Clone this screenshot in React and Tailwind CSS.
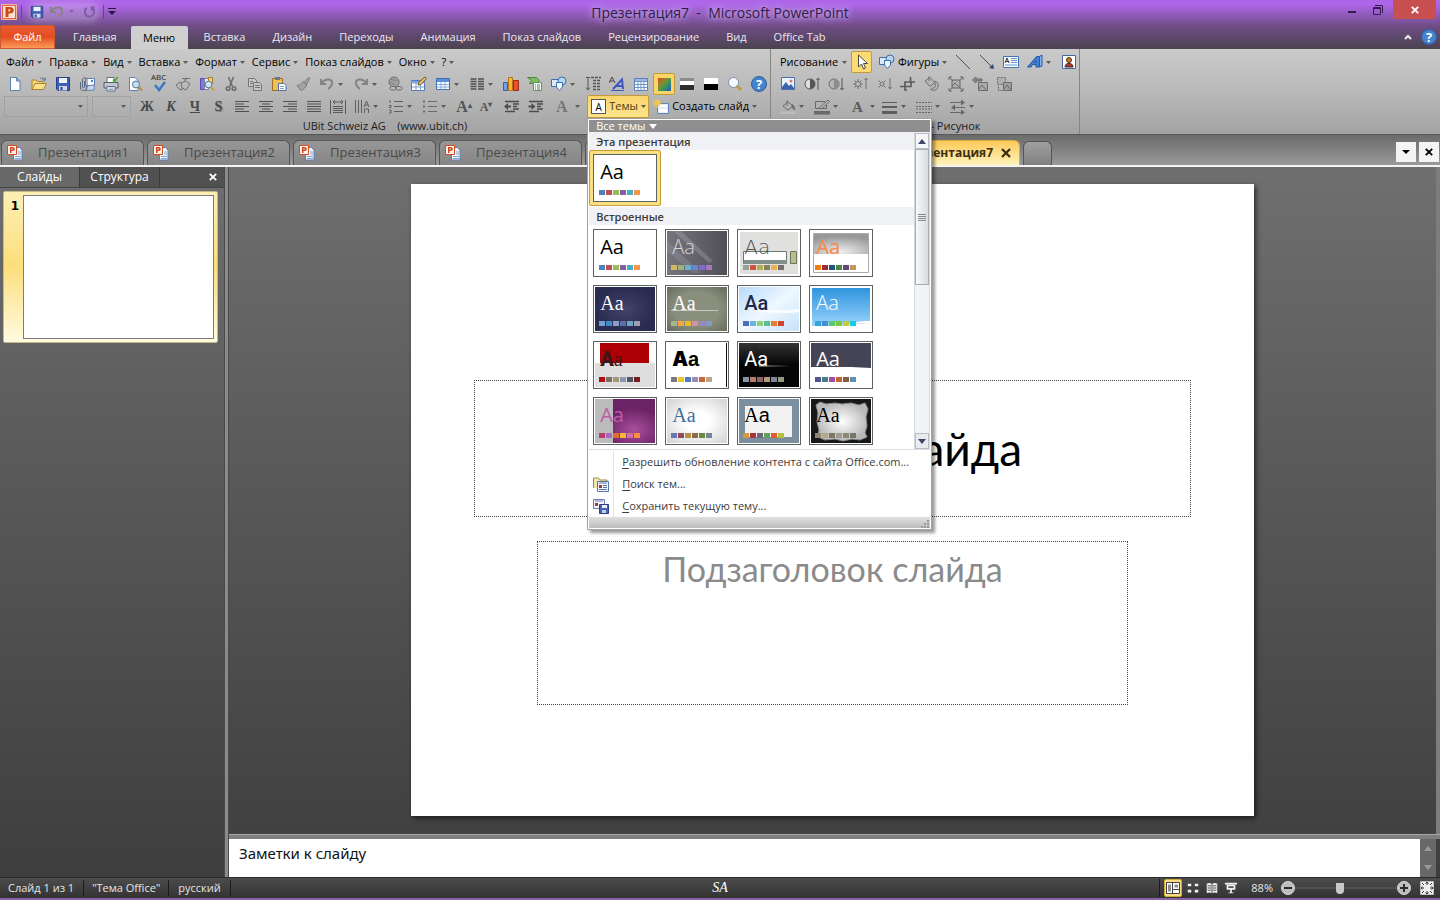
import React, { useState } from 'react';
import clsx from 'clsx';

/* 16x16 toolbar glyphs */
const icons = {
    page: <path d="M3.500 1.500h6L13 5v9.500H3.500z M9.500 1.500V5H13" fill="#fdfeff" stroke="#5b82b5" />,
    folder: (
        <g>
            <path d="M1 13.500V4h4l1.500 1.500H12V8" fill="#f6d77d" stroke="#a98532" />
            <path d="M1 13.500 4 7.500h11.500L12.500 13.500z" fill="#fbe08b" stroke="#a98532" />
            <path d="M9 3c2-2 4-1 5 1M14.500 1.500 14 4.500l-2.500-1" fill="none" stroke="#4d6f9c" />
        </g>
    ),
    save: (
        <g>
            <path d="M1.500 1.500h13v13H3l-1.500-1.500z" fill="#3f5fb4" stroke="#29408a" />
            <path d="M4 2h8v5H4z" fill="#eef3fb" />
            <path d="M4 10h8v4.500H4z" fill="#cfd8ea" />
            <path d="M5.500 11h2v3h-2z" fill="#2b3f86" />
        </g>
    ),
    mail: (
        <g>
            <path d="M6.500 2.500h9v7h-9z" fill="#f7faff" stroke="#5c7fae" />
            <path d="M12 4h2v2h-2z" fill="#4b83cd" />
            <path d="M7 14.500 15 14l.5-5-8 1z" fill="#c7d8ee" stroke="#6883ab" />
            <path d="M5.500 5v6c0 1-2 1-2 0V4c0-3 4.500-3 4.500 0v8c0 3.500-6.500 3.500-6.500 0V6" fill="none" stroke="#5d6b80" />
        </g>
    ),
    print: (
        <g>
            <path d="M4 6V1.500h7V6" fill="#fff" stroke="#5e6d85" />
            <path d="M1 6.500h14v5.500H1z" fill="#c3c8d0" stroke="#555d6b" />
            <path d="M4 10.500h8v4.500H4z" fill="#fff" stroke="#5e6d85" />
            <path d="M5.500 12h5M5.500 13.500h5" stroke="#8aa0c0" />
            <path d="m10 3.500 1.500 2L14.500 1" fill="none" stroke="#4ca832" strokeWidth="1.700" />
        </g>
    ),
    preview: (
        <g>
            <path d="M2.500 1.500H8L11 4.500v10H2.500z" fill="#fdfeff" stroke="#5b82b5" />
            <circle cx="9" cy="8.500" r="3.500" fill="#bfe2f8" stroke="#5a7390" />
            <path d="m11.500 11 3.500 3.500" stroke="#b98a3a" strokeWidth="2" />
        </g>
    ),
    spell: <path d="m4 9 4 5 6-8" fill="none" stroke="#3a79ca" strokeWidth="2.500" />,
    book: (
        <g fill="#b9b9b9" stroke="#717171">
            <path d="m1 9 4-3 3 3-1 5-3-1z" />
            <path d="m6 7 5-2 4 3-4 6-4-2z" />
            <path d="M7 2.500h8M9 4.500l3-2" />
        </g>
    ),
    research: (
        <g>
            <path d="M1.500 2.500h4v11h-4z" fill="#8a78d8" stroke="#5b4bab" />
            <path d="M5.500 2.500h4v11h-4z" fill="#e9eefa" stroke="#7485a8" />
            <path d="M9.500 1.500h4v6h-4z" fill="#f3cf73" stroke="#a07d31" />
            <circle cx="9.500" cy="8.500" r="3.300" fill="#cde8fa" stroke="#5a7390" />
            <path d="m12 11 3 3.500" stroke="#c8a338" strokeWidth="2" />
        </g>
    ),
    cut: (
        <g fill="none" stroke="#6e6e6e" strokeWidth="1.600">
            <path d="m5.500 1 4 9.500M10.500 1l-4 9.500" />
            <circle cx="5" cy="12.500" r="1.800" />
            <circle cx="11" cy="12.500" r="1.800" />
        </g>
    ),
    copy: (
        <g fill="#c6c6c6" stroke="#747474">
            <path d="M1.500 2.500h6l2 2v6h-8z" />
            <path d="M6.500 6.500h6l2 2v6h-8zM8 9.500h5M8 11.500h5" />
            <path d="M3 5.500h3M3 7.500h3" />
        </g>
    ),
    paste: (
        <g>
            <path d="M1.500 2.500h10v12h-10z" fill="#eebf55" stroke="#9a7122" />
            <path d="M4 1h5v3H4z" fill="#6b7890" />
            <path d="M7.500 7.500h5.500l2 2v5H7.500z" fill="#fff" stroke="#4b6fa8" />
            <path d="M9 10.500h4M9 12.500h4" stroke="#7ea0d0" />
        </g>
    ),
    brush: (
        <g fill="#a3a3a3" stroke="#7b7b7b">
            <path d="m9.500 6 4-4.500 1.500 1L11.500 8z" />
            <path d="M2 9.500c2.500 0 4-1.500 6-4l4 3.500c-2 3-4 5-6 5.500z" />
        </g>
    ),
    undo: <path d="M2 3v5h5M2.500 7.500C5 3 12 2 13 6c.8 3-2 5.500-4 7" fill="none" stroke="#858585" strokeWidth="2" />,
    redo: <path d="M14 3v5H9M13.500 7.500C11 3 4 2 3 6c-.8 3 2 5.500 4 7" fill="none" stroke="#858585" strokeWidth="2" />,
    repeat: <path d="M9 3.500h4.500M10.500 3v4.500M11.500 4c3 3 1.500 9.500-3.500 9.500s-6.500-6-3-9.500" fill="none" stroke="#7d5da3" strokeWidth="2" />,
    link: (
        <g>
            <circle cx="7" cy="6" r="5" fill="#a2a2a2" stroke="#6f6f6f" />
            <path d="M4 3c2 2 4 0 6 2M3 7c3-1 3 2 5 1" stroke="#777" fill="none" />
            <rect x="3" y="10.500" width="6" height="3.500" rx="1.700" fill="#bbb" stroke="#6b6b6b" />
            <rect x="9" y="10.500" width="6" height="3.500" rx="1.700" fill="#bbb" stroke="#6b6b6b" />
        </g>
    ),
    drawTable: (
        <g>
            <path d="M.5 4.500h13v10H.5z" fill="#fff" stroke="#4d7ab8" />
            <path d="M.5 5h13v2.500H.5z" fill="#7fa9dd" />
            <path d="M5 5v9.500M9.500 5v9.500M1 11h12" stroke="#7fa0cc" />
            <path d="m7 9 1-3 6-5 1.500 1.500-5.500 6z" fill="#f0c565" stroke="#6d5530" />
        </g>
    ),
    table: (
        <g>
            <path d="M1.500 2.500h13v11h-13z" fill="#fff" stroke="#3f70b5" />
            <path d="M2 3h12v3H2z" fill="#5b8fd6" />
            <path d="M6 6v7.500M10 6v7.500M2 8.500h12M2 11h12" stroke="#86a9d8" />
        </g>
    ),
    columns: <path d="M1.500 3h6M1.500 5.500h6M1.500 8h6M1.500 10.500h6M1.500 13h6M9 3h6M9 5.500h6M9 8h6M9 10.500h6M9 13h6" stroke="#4f4f4f" strokeWidth="1.300" />,
    chart: (
        <g>
            <path d="M.5 6.500h4v8h-4z" fill="#6fa3e3" stroke="#35619c" />
            <path d="M5.500 1.500h4v13h-4z" fill="#f9b730" stroke="#b5761a" />
            <path d="M10.500 4.500h5v10h-5z" fill="#e8512f" stroke="#9c2c16" />
        </g>
    ),
    outline: (
        <g>
            <path d="M.5 1.500h9l3 3-3 3h-7l2-3z" fill="#7cbd62" stroke="#4a8a38" />
            <path d="M6.500 6.500h8v8h-8z" fill="#f3f7f3" stroke="#6c8a70" />
            <path d="M8 9h1M10 9h3M8 11h1M10 11h3M8 13h1M10 13h3" stroke="#568a50" />
        </g>
    ),
    shapes: (
        <g stroke="#3c6fb0">
            <path d="M.5 3.500h8v7h-8z" fill="#dbe9f8" />
            <circle cx="11" cy="5" r="4" fill="#b9d5f2" />
            <path d="M5.500 6.500h6v4.500l-3 3.500-3-3.500z" fill="#f4f9ff" />
        </g>
    ),
    spacing: (
        <g stroke="#555" fill="none">
            <path d="M3 1v13M1 11.500 3 14l2-2.500M1 1.500h4" />
            <path d="M6 1.500h10M8 4.500h7M8 7.500h7M8 10.500h7M8 13.500h7" strokeDasharray="3 1" strokeWidth="1.300" />
        </g>
    ),
    styleA: (
        <g fill="none">
            <path d="m0 7 3-6L6 7M1 5h4" stroke="#444" />
            <path d="m4 13 9-9.500 1 9.500M7 10h7" stroke="#3d57c0" strokeWidth="2" />
            <path d="M2 14.500h13" stroke="#3d57c0" />
        </g>
    ),
    sheet: (
        <g>
            <path d="M1.500 2.500h13v12h-13z" fill="#fff" stroke="#5c7fb5" />
            <path d="M2 5.500h12M2 8.500h12M2 11.500h12M5 3v11M8 3v11M11 3v11" stroke="#6f94ca" />
            <path d="M2 3h12v2H2z" fill="#9ab9e2" />
        </g>
    ),
    bwGray: (
        <g>
            <path d="M1 2h14v4H1z" fill="#8c8c8c" />
            <path d="M1 5h14v5H1z" fill="#fff" />
            <path d="M1 9h14v5H1z" fill="#2d2d2d" />
        </g>
    ),
    bwPure: (
        <g>
            <path d="M1 2h14v12H1z" fill="#fff" />
            <path d="M1 8h14v6H1z" fill="#000" />
        </g>
    ),
    zoom: (
        <g>
            <path d="m10 10 4 4" stroke="#c49a3c" strokeWidth="3" />
            <circle cx="6.500" cy="6.500" r="5" fill="#f4faff" stroke="#7d8da3" />
        </g>
    ),
    cursor: <path d="M4.500 1v12l3-3 2 5 2-1-2-4.500h4z" fill="#fff" stroke="#474747" />,
    line: <path d="m1 1 14 14" stroke="#4d4d4d" />,
    lineArrow: (
        <g>
            <path d="m1 1 12 12" stroke="#4d4d4d" />
            <path d="m15 15-5-1 4-4z" fill="#31467c" />
        </g>
    ),
    textBox: (
        <g>
            <path d="M.5 2.500h15v11H.5z" fill="#f6faff" stroke="#4674b1" />
            <path d="m2 9 2-5 2 5M3 7.500h3" fill="none" stroke="#333" />
            <path d="M8 4.500h6M8 6.500h6M8 8.500h6M2 11h12" stroke="#6c95cc" />
        </g>
    ),
    wordArt: (
        <g>
            <path d="M.5 13 9.500 2.500h3V13H9v-2.500H5.500L4 13zM7 8.500h2V6z" fill="#3f7fd4" stroke="#2657a5" fillRule="evenodd" />
            <path d="M12.500 2.500 15 1v11l-2.500 1z" fill="#88b3ea" stroke="#2657a5" />
        </g>
    ),
    clipArt: (
        <g>
            <path d="M1.500 1.500h13v13h-13z" fill="#fff" stroke="#45669d" />
            <circle cx="8" cy="6" r="2.500" fill="#c47631" stroke="#5c3513" />
            <path d="M4 13c0-5 8-5 8 0z" fill="#a33a2a" stroke="#4c2418" />
        </g>
    ),
    picture: (
        <g>
            <path d="M1.500 1.500h13v12h-13z" fill="#e9f3ff" stroke="#4d70a8" />
            <path d="m2 11 4-5 3 4 2-2 3 4v1H2z" fill="#3b64ad" />
            <circle cx="11" cy="5" r="1.500" fill="#e7773c" />
        </g>
    ),
    contrastUp: (
        <g>
            <circle cx="6" cy="8" r="5" fill="#ddd" stroke="#555" />
            <path d="M6 3a5 5 0 0 1 0 10z" fill="#555" />
            <path d="M14 2v12M12.500 4 14 2l1.500 2" stroke="#555" fill="none" />
        </g>
    ),
    contrastDown: (
        <g>
            <circle cx="6" cy="8" r="5" fill="#b5b5b5" stroke="#6b6b6b" />
            <path d="M6 3a5 5 0 0 1 0 10z" fill="#8d8d8d" />
            <path d="M14 2v12M12.500 12l1.500 2 1.500-2" stroke="#555" fill="none" />
        </g>
    ),
    brightUp: (
        <g stroke="#707070" fill="none">
            <circle cx="6" cy="8" r="2.500" />
            <path d="M6 3v2M6 11v2M1 8h2M9 8h2M2.500 4.500 4 6M8 10l1.500 1.500M9.500 4.500 8 6M4 10l-1.500 1.500M14 2v11M12.500 4 14 2l1.500 2" />
        </g>
    ),
    brightDown: (
        <g stroke="#707070" fill="none">
            <circle cx="6" cy="8" r="2" />
            <path d="M2.500 4.500 4 6M8 10l1.500 1.500M9.500 4.500 8 6M4 10l-1.500 1.500M14 2v11M12.500 11l1.500 2 1.500-2" />
        </g>
    ),
    crop: <path d="M5 7v7h2M0 10.500h11V5M5 10V6h10M10.500 1v5" fill="none" stroke="#5d5d5d" strokeWidth="1.700" />,
    recolor: (
        <g fill="#b5b5b5" stroke="#6f6f6f">
            <path d="m1 5 5-3.500 5 5-5 4z" />
            <path d="M5 5V.5" fill="none" />
            <path d="M11 5c3 1 4 4 2.500 7.500-1 2-5 2.500-7 1l2-1.500c2 .5 3-1 2.500-2.500z" />
        </g>
    ),
    compress: (
        <g fill="none" stroke="#696969">
            <path d="M4 4h8v8H4z" fill="#adadad" />
            <path d="m4 10 3-3 5 5M1 1l4 4M15 1l-4 4M1 15l4-4M15 15l-4-4M1 4V1h3M12 1h3v3M1 12v3h3M15 12v3h-3" />
        </g>
    ),
    changePic: (
        <g stroke="#6b6b6b">
            <path d="M6.500 6.500h9v8h-9z" fill="#a9a9a9" />
            <path d="m7 13 3-4 4 5" fill="none" />
            <path d="M4 1 .5 4 4 7V5h6V3H4z" fill="#8a8a8a" />
        </g>
    ),
    resetPic: (
        <g stroke="#6b6b6b">
            <path d="M1.500 1.500h8v7h-8zM2.500 10.500v4h4" fill="#b0b0b0" strokeDasharray="2 1" />
            <path d="M7.500 6.500h8v8h-8z" fill="#a0a0a0" />
            <path d="m8 13 3-4 4 5" fill="none" />
        </g>
    ),
    left: <path d="M1 2.500h14M1 5h9M1 7.500h14M1 10h9M1 12.500h14" stroke="#4f4f4f" strokeWidth="1.200" />,
    center: <path d="M1 2.500h14M4 5h8M1 7.500h14M4 10h8M1 12.500h14" stroke="#4f4f4f" strokeWidth="1.200" />,
    right: <path d="M1 2.500h14M6 5h9M1 7.500h14M6 10h9M1 12.500h14" stroke="#4f4f4f" strokeWidth="1.200" />,
    justify: <path d="M1 2.500h14M1 5h14M1 7.500h14M1 10h14M1 12.500h14" stroke="#4f4f4f" strokeWidth="1.200" />,
    distribute: (
        <g stroke="#5a5a5a" fill="none">
            <path d="M.5 1v14M15.500 1v14M3 3h10M5 1 3 3l2 2M11 1l2 2-2 2M3 7.500h10M3 9.500h10M3 11.500h10M3 13.500h10" />
        </g>
    ),
    textDir: <path d="M1.500 1v13M4.500 1v13M7.500 1v13M10 8l2.500-6L15 8M11 6h3M10.500 10v4M14.500 10v4M10.500 10h4" fill="none" stroke="#5f5f5f" />,
    numbered: <path d="M2 1v3M1 6.500h2v2H1M1 11h2v3H1M6 2.500h9M6 7.500h9M6 12.500h9" fill="none" stroke="#5f5f5f" />,
    bullets: (
        <g>
            <path d="M1 1.500h2v2H1zM1 6.500h2v2H1zM1 11.500h2v2H1z" fill="#6e6e6e" />
            <path d="M6 2.500h9M6 7.500h9M6 12.500h9" stroke="#6a6a6a" />
        </g>
    ),
    outdent: (
        <g>
            <path d="M1 2.500h14M9 5h6M9 7.500h4M9 10h6M1 12.500h10" stroke="#4c4c4c" strokeWidth="1.300" />
            <path d="M0 7.500 4 4v2.500h3v2H4V11z" fill="#4c4c4c" />
        </g>
    ),
    indent: (
        <g>
            <path d="M1 2.500h14M9 5h6M9 7.500h4M9 10h6M1 12.500h10" stroke="#4c4c4c" strokeWidth="1.300" />
            <path d="M7.500 7.500 3.500 4v2.500h-3v2h3V11z" fill="#4c4c4c" />
        </g>
    ),
    bucket: (
        <g stroke="#6c6c6c">
            <path d="m3 7 5-4 5 4-5 4z" fill="#b5b5b5" />
            <path d="M7 7V1" fill="none" />
            <path d="M12 5.500c2 1 3 3 2.500 5.500L12 8z" fill="#6c6c6c" />
            <path d="M0 12.500h15v2.500H0z" fill="#bcbcbc" stroke="none" />
        </g>
    ),
    pen: (
        <g stroke="#686868">
            <path d="M11 2.500H1.500v7h11V6" fill="none" />
            <path d="m5 9 9-8 1.500 1.500L7 10z" fill="#bdbdbd" />
            <path d="M0 12.500h16v2.500H0z" fill="#6c6c6c" />
        </g>
    ),
    weight: (
        <g fill="#5d5d5d">
            <path d="M0 3h15v1H0zM0 7h15v2H0zM0 12h15v3H0z" />
        </g>
    ),
    dash: <path d="M0 3.500h16M0 7.500h16M0 10h16M0 13.500h16" stroke="#656565" strokeDasharray="2 1" />,
    arrows: (
        <g fill="#686868">
            <path d="M0 3h11V.5l4 3-4 3V4H0zM15 8H5V5.500l-4 3 4 3V9h10zM0 13h11v-2.500l4 3-4 2.500v-2H0z" />
        </g>
    ),
    newSlide: (
        <g>
            <path d="M4.500 4.500h11v10h-11z" fill="#e4edf9" stroke="#5f86bb" />
            <path d="M6 6h8v2H6zM6 10h8v3H6z" fill="#fff" />
            <path d="M4 0v9M0 4h8M1 1l6 6M7 1 1 7" stroke="#f4c84a" strokeWidth="1.300" />
        </g>
    ),
    browse: (
        <g>
            <path d="M.5 12V2h5l1.500 2H14v9" fill="#f3e6ad" stroke="#a28a45" />
            <path d="M4.500 5.500h11v10h-11z" fill="#f6f8fd" stroke="#5b77aa" />
            <path d="M6 7h8" stroke="#5b77aa" />
            <path d="M6 9h3v3H6z" fill="#a13a3a" />
            <path d="M10 9.500h4M10 11.500h4M6 13.500h8" stroke="#5b77aa" />
        </g>
    ),
    saveTheme: (
        <g>
            <path d="M.5 1.500h11v9H.5z" fill="#f3f5fb" stroke="#6c7fb2" />
            <path d="M2 3h8" stroke="#6c7fb2" />
            <path d="M2 5h3v3H2z" fill="#a13a3a" />
            <path d="M6.500 6.500h9v9h-9z" fill="#4863b0" stroke="#2b3f86" />
            <path d="M9 7h5v3H9z" fill="#e7edf8" />
            <path d="M9 12h4v3H9z" fill="#c4cfe6" />
        </g>
    ),
    doc: (
        <g>
            <path d="M6.500 2.500h6l2.500 2.500v10H6.500z" fill="#eef4fc" stroke="#5c82b6" />
            <path d="M11 7h3M11 9h3M8 11.500h6M8 13.500h6" stroke="#85a6d2" />
            <path d="M.5.5h9v9h-9z" fill="#fff4ec" stroke="#d9481f" />
            <path d="M3 8V2h2.500C8.500 2 8.500 6 5.500 6H4.500v2zM4.500 3.300v1.500c2 .2 2-1.600 0-1.500z" fill="#cf4520" fillRule="evenodd" />
        </g>
    ),
    app: (
        <g>
            <path d="M.5.5h15v15H.5z" fill="#e5603c" stroke="#f3b79d" />
            <path d="M2 2h12v12H2z" fill="#fbe3d2" />
            <path d="M4.500 13V3H9c5 0 5 6.500 0 6.500H7.500V13zM7.500 5v2.500c2.500.3 2.500-2.800 0-2.500z" fill="#c84a16" fillRule="evenodd" />
        </g>
    ),
    normalView: (
        <g>
            <path d="M1.500 2.500h13v11h-13z" fill="#fff" stroke="#3f3f3f" />
            <path d="M7.500 3v10M8 9.500h6" stroke="#3f3f3f" />
            <path d="M3 4.500h3v7H3zM9.500 4.500h3.500v3H9.500z" fill="#8d8d8d" />
        </g>
    ),
    sorter: <path d="M2 3h4v3H2zM10 3h4v3h-4zM2 10h4v3H2zM10 10h4v3h-4z" fill="#f0f0f0" />,
    reading: (
        <g>
            <path d="M2 3c2-1 4-1 5.500 0v11C6 13 4 13 2 14zM14 3c-2-1-4-1-5.500 0v11c1.500-1 3.500-1 5.500 0z" fill="#f0f0f0" />
            <path d="M3 5.500h4M3 8h4M3 10.500h4M9 5.500h4M9 8h4M9 10.500h4" stroke="#444" />
        </g>
    ),
    show: (
        <g>
            <path d="M1 2h14v2H1z" fill="#f0f0f0" />
            <path d="M3 4h10v6H3zM7 10h2v3H7zM5 13h6v1H5z" fill="#f0f0f0" />
            <path d="M5 6h6v2H5z" fill="#555" />
        </g>
    ),
    fit: (
        <g>
            <path d="M1.500 1.500h13v13h-13z" fill="#f1f1f1" stroke="#bbb" />
            <path d="M8 2v3M6.500 3.500 8 2l1.500 1.500M8 14v-3M6.500 12.500 8 14l1.500-1.500M2 8h3M3.500 6.500 2 8l1.500 1.500M14 8h-3M12.500 6.500 14 8l-1.500 1.500M3 3l2 2M13 3l-2 2M3 13l2-2M13 13l-2-2" fill="none" stroke="#333" />
        </g>
    ),
};

const Icon = ({ name, className = 'h-4 w-4' }) => (
    <svg viewBox="0 0 16 16" aria-hidden="true" className={clsx('shrink-0', className)}>
        {icons[name]}
    </svg>
);

const Caret = ({ className = 'text-[#5a5a5a]' }) => (
    <svg viewBox="0 0 5 3" aria-hidden="true" className={clsx('h-[3px] w-[5px] shrink-0', className)}>
        <path d="M0 0h5L2.500 3z" fill="currentColor" />
    </svg>
);

const Cross = ({ className = 'h-2 w-2' }) => (
    <svg viewBox="0 0 10 10" aria-hidden="true" className={className}>
        <path d="m1 1 8 8M9 1 1 9" stroke="currentColor" strokeWidth="2.300" />
    </svg>
);

const HelpIcon = () => (
    <span className="flex h-4 w-4 items-center justify-center rounded-full border border-[#2d5d9e] bg-[#4583cf] text-[13px] leading-4 font-bold text-white">?</span>
);

const ribbonTabs = ['Вставка', 'Дизайн', 'Переходы', 'Анимация', 'Показ слайдов', 'Рецензирование', 'Вид', 'Office Tab'];

const menus = ['Файл', 'Правка', 'Вид', 'Вставка', 'Формат', 'Сервис', 'Показ слайдов', 'Окно', '?'];

const standardTools = [
    { icon: 'page', label: 'Создать' },
    { icon: 'folder', label: 'Открыть' },
    { icon: 'save', label: 'Сохранить' },
    { icon: 'mail', label: 'Отправить' },
    { icon: 'print', label: 'Печать' },
    { icon: 'preview', label: 'Просмотр' },
    { icon: 'spell', label: 'Орфография' },
    { icon: 'book', label: 'Тезаурус' },
    { icon: 'research', label: 'Справочники' },
    { icon: 'cut', label: 'Вырезать' },
    { icon: 'copy', label: 'Копировать' },
    { icon: 'paste', label: 'Вставить' },
    { icon: 'brush', label: 'Формат по образцу' },
    { icon: 'undo', label: 'Отменить', menu: true },
    { icon: 'redo', label: 'Повторить', menu: true },
    { icon: 'link', label: 'Гиперссылка' },
    { icon: 'drawTable', label: 'Нарисовать таблицу' },
    { icon: 'table', label: 'Таблица', menu: true },
    { icon: 'columns', label: 'Колонки', menu: true },
];

const insertTools = [
    { icon: 'chart', label: 'Диаграмма' },
    { icon: 'outline', label: 'SmartArt' },
    { icon: 'shapes', label: 'Фигуры', menu: true },
    { icon: 'spacing', label: 'Интервал' },
    { icon: 'styleA', label: 'Стили' },
    { icon: 'sheet', label: 'Сетка' },
    { icon: 'colorMode', label: 'Цвет', active: true },
    { icon: 'bwGray', label: 'Оттенки серого' },
    { icon: 'bwPure', label: 'Чёрно-белый' },
    { icon: 'zoom', label: 'Масштаб' },
    { icon: 'help', label: 'Справка' },
];

const alignTools = [
    { icon: 'left', label: 'По левому краю' },
    { icon: 'center', label: 'По центру' },
    { icon: 'right', label: 'По правому краю' },
    { icon: 'justify', label: 'По ширине' },
    { icon: 'distribute', label: 'Распределить' },
    { icon: 'textDir', label: 'Направление текста', menu: true },
    { icon: 'numbered', label: 'Нумерация', menu: true },
    { icon: 'bullets', label: 'Маркеры', menu: true },
];

const pictureTools = [
    { icon: 'picture', label: 'Рисунок' },
    { icon: 'contrastUp', label: 'Увеличить контрастность' },
    { icon: 'contrastDown', label: 'Уменьшить контрастность' },
    { icon: 'brightUp', label: 'Увеличить яркость' },
    { icon: 'brightDown', label: 'Уменьшить яркость' },
    { icon: 'crop', label: 'Обрезка' },
    { icon: 'recolor', label: 'Перекрасить' },
    { icon: 'compress', label: 'Сжать рисунки' },
    { icon: 'changePic', label: 'Изменить рисунок' },
    { icon: 'resetPic', label: 'Сброс рисунка' },
];

function Tool({ icon, label, menu, active }) {
    return (
        <button
            aria-label={label}
            className={clsx(
                'flex shrink-0 items-center',
                menu ? 'w-[34px] gap-[3px] pl-1' : 'justify-center',
                !menu && !active && 'w-6',
                active ? 'h-[22px] w-[22px] rounded-xs border border-[#c19a3b] bg-[#fbd568]' : 'h-5'
            )}
        >
            {icon === 'help' && <HelpIcon />}
            {icon === 'colorMode' && <span className="h-[13px] w-[13px] bg-linear-to-br from-[#e0301e] via-[#4f9a3a] to-[#2457b8]"></span>}
            {icon === 'spell' ? (
                <span className="relative">
                    <Icon name="spell" />
                    <span className="absolute -top-1 left-0 text-[8px] leading-[9px] text-[#222]">ABC</span>
                </span>
            ) : (
                icons[icon] && <Icon name={icon} />
            )}
            {menu && <Caret />}
        </button>
    );
}

/* Theme thumbnails: art is drawn on a 60x44 field */
const themes = [
    { name: 'Office', head: "font-['Open_Sans'] text-black", colors: ['#4f81bd', '#c0504d', '#9bbb59', '#8064a2', '#4bacc6', '#f79646'], art: null },
    {
        name: 'Апекс', head: "font-['Open_Sans'] font-light text-[#d5d3da]", colors: ['#ceb966', '#9cb084', '#6bb1c9', '#6585cf', '#7e6bc9', '#a379bb'],
        art: (
            <g>
                <path d="M0 0h60v44H0z" fill="url(#apex)" />
                <path d="M0 10 34 42h-8L0 20z" fill="#b5b3ba" opacity=".2" />
                <path d="M14 0 46 30l-4 2L6 0z" fill="#b5b3ba" opacity=".3" />
                <defs><linearGradient id="apex" x2="1"><stop stopColor="#77757c" /><stop offset="1" stopColor="#504e57" /></linearGradient></defs>
            </g>
        ),
    },
    {
        name: 'Аптека', head: "font-['DejaVu_Sans'] font-extralight text-[#4d5350]", colors: ['#93a299', '#cf543f', '#b5ae53', '#848058', '#e8b54d', '#786c71'],
        art: (
            <g>
                <path d="M1 1h58v42H1z" fill="#e0e1df" />
                <path d="M4.500 20.500h43v12h-43z" fill="#fff" stroke="#6a7772" />
                <path d="M5 29h43v4H5z" fill="#82908a" />
                <path d="M51.500 20.500h6v12h-6z" fill="#b9be8d" stroke="#6f745e" />
            </g>
        ),
    },
    {
        name: 'Аспект', head: "font-['Noto_Sans'] text-[#f58b4c]", colors: ['#f07f09', '#9f2936', '#1b587c', '#4e8542', '#604878', '#c19859'],
        art: (
            <g>
                <path d="M2.500 2.500h55v39h-55z" fill="#fff" stroke="#aaa" />
                <path d="M3 3h54v20H3z" fill="url(#aspectTop)" />
                <defs><radialGradient id="aspectTop" cx=".5" cy=".9" r=".8"><stop stopColor="#eee" /><stop offset="1" stopColor="#989898" /></radialGradient></defs>
            </g>
        ),
    },
    {
        name: 'Городская', head: "font-['Liberation_Serif'] text-white", colors: ['#72a0cf', '#4289c8', '#8b9cc7', '#5d6fa8', '#6ba5c8', '#9f9fb3'],
        art: (
            <g>
                <path d="M0 0h60v44H0z" fill="url(#navy)" />
                <defs><radialGradient id="navy"><stop stopColor="#43426a" /><stop offset="1" stopColor="#292b51" /></radialGradient></defs>
            </g>
        ),
    },
    {
        name: 'Литейная', head: "font-['Liberation_Serif'] text-white", colors: ['#a5b592', '#f3a447', '#e7bc29', '#d092a7', '#9c85c0', '#809ec2'],
        art: (
            <g>
                <path d="M0 0h60v44H0z" fill="url(#foundry)" />
                <path d="M4 23.500h47" stroke="#c8cbbf" />
                <defs><radialGradient id="foundry" r=".75"><stop offset=".5" stopColor="#8a8e7d" /><stop offset="1" stopColor="#62665a" /></radialGradient></defs>
            </g>
        ),
    },
    {
        name: 'Метро', head: "font-['Roboto'] font-medium text-[#202b4b]", colors: ['#4b6cb8', '#6bb3da', '#91cf7a', '#5cbd91', '#ec7a32', '#cf4531'],
        art: (
            <g>
                <path d="M0 0h60v44H0z" fill="url(#ice)" />
                <path d="M10 25c14-4 32 0 50-3v3c-18 3-36-1-50 0z" fill="#fff" opacity=".8" />
                <defs><linearGradient id="ice" x2="1" y2="1"><stop stopColor="#b6dafb" /><stop offset=".5" stopColor="#eff8ff" /><stop offset="1" stopColor="#c6e2fa" /></linearGradient></defs>
            </g>
        ),
    },
    {
        name: 'Поток', head: "font-['Open_Sans'] font-light text-white", colors: ['#38a5e0', '#4a8ed0', '#57c96e', '#7bc843', '#c5c93c', '#12cdea'],
        art: (
            <g>
                <path d="M1 1h58v42H1z" fill="url(#flowBg)" />
                <path d="M0 44v-5c25 1 40-3 60-2v7z" fill="#fff" />
                <path d="M42 36c6-2 12-2 18-2v3z" fill="#fff" />
                <defs><linearGradient id="flowBg" x2="0" y2="1"><stop stopColor="#2f94de" /><stop offset="1" stopColor="#a5daff" /></linearGradient></defs>
            </g>
        ),
    },
    {
        name: 'Справедливость', head: "font-['Roboto'] font-black text-[#3f1518]", body: "font-['Liberation_Serif'] font-normal", colors: ['#b10b15', '#777063', '#a29578', '#8699ae', '#4f5766', '#781c1c'],
        art: (
            <g>
                <path d="M0 20h60v24H0z" fill="#dedede" />
                <path d="M5 0h49v20H5z" fill="#ac0004" />
            </g>
        ),
    },
    {
        name: 'Твердый переплет', head: "font-['Inter'] font-black text-black", body: "font-['Liberation_Sans'] font-bold", colors: ['#7c7783', '#e8c82e', '#5578b6', '#9b8bb5', '#c4653b', '#baa58a'],
        art: <path d="M59.500 0v44" stroke="#111" />,
    },
    {
        name: 'Техническая', head: "font-['Roboto'] text-white", colors: ['#8395a6', '#bd7a67', '#8c6464', '#b69880', '#7c8a96', '#949a7f'],
        art: (
            <g>
                <path d="M0 0h60v44H0z" fill="url(#tech)" />
                <path d="m20 22 32 1-32 1z" fill="#65645a" />
                <defs><linearGradient id="tech" x2="0" y2="1"><stop stopColor="#333" /><stop offset=".5" stopColor="#050505" /></linearGradient></defs>
            </g>
        ),
    },
    {
        name: 'Трек', head: "font-['Open_Sans'] text-white", colors: ['#53548a', '#438086', '#a04da3', '#c4652d', '#8b5d3d', '#5c92b5'],
        art: <path d="M0 0h60v25l-20-1H0z" fill="#454456" />,
    },
    {
        name: 'Яркая', head: "font-['Open_Sans'] text-[#c05aa7]", colors: ['#b83d68', '#ac66bb', '#de6c36', '#f9b639', '#cf6da4', '#fa8d3d'],
        art: (
            <g>
                <path d="M0 0h60v44H0z" fill="url(#plum)" />
                <path d="M0 0h18v44H0z" fill="#bcbcbc" />
                <defs><radialGradient id="plum" cx=".65" cy=".7"><stop stopColor="#a94f9d" /><stop offset="1" stopColor="#6a2364" /></radialGradient></defs>
            </g>
        ),
    },
    {
        name: 'Бумажная', head: "font-['Liberation_Serif'] text-[#3f6f9f]", colors: ['#6776b4', '#8e4b57', '#b78f45', '#8b6c46', '#6e8a38', '#76869a'],
        art: (
            <g>
                <path d="M0 0h60v44H0z" fill="url(#paper)" />
                <defs><radialGradient id="paper" r=".7"><stop offset=".3" stopColor="#fff" /><stop offset="1" stopColor="#d2d2d2" /></radialGradient></defs>
            </g>
        ),
    },
    {
        name: 'Открытая', head: "font-['Liberation_Serif'] text-black", body: "font-['Liberation_Sans']", colors: ['#ce9b3e', '#a8333d', '#6c6773', '#62a058', '#dd5d30', '#b3c33e'],
        art: (
            <g>
                <path d="M0 0h60v44H0z" fill="#7c8f9f" />
                <path d="M6 7h47v31H6z" fill="#f2f2f2" />
            </g>
        ),
    },
    {
        name: 'Кутюр', head: "font-['Liberation_Serif'] text-black", colors: ['#8b8773', '#b2a987', '#7b7767', '#a09a91', '#8d8975', '#77746b'],
        art: (
            <g>
                <path d="M0 0h60v44H0z" fill="#17181a" />
                <path d="m5 6 4-3 6 2 9-1 7 1 9-1 8 2 6-2 3 6-2 8 1 9-2 7 2 4-7 3-8-1-9 2-8-2-10 1-7-3 1-7-2-8 1-9z" fill="url(#couture)" stroke="#8a8a8a" />
                <defs><radialGradient id="couture"><stop stopColor="#fff" /><stop offset="1" stopColor="#b9b9b9" /></radialGradient></defs>
            </g>
        ),
    },
];

function ThemeThumb({ theme }) {
    return (
        <button aria-label={theme.name} className="relative flex h-12 w-16 flex-col border border-[#5c6461] bg-white text-left">
            <svg viewBox="0 0 60 44" aria-hidden="true" className="absolute inset-px h-11 w-[60px]">{theme.art}</svg>
            <span className={clsx('relative h-[35px] pt-[3px] pl-[6px] text-[20px] leading-7', theme.head)}>
                A<span className={theme.body}>a</span>
            </span>
            <span className="relative flex gap-px pl-[5px]">
                {theme.colors.map((c, i) => (
                    <span key={i} className="h-[5px] w-[6px]" style={{ backgroundColor: c }}></span>
                ))}
            </span>
        </button>
    );
}

function ThemesMenu() {
    return (
        <div className="absolute top-full left-0 z-20 w-[345px] border border-[#a2a2a2] bg-white p-px text-[11px] leading-4 text-[#3b3b3b] shadow-[3px_3px_3px_rgba(0,0,0,0.4)]">
            <button className="flex h-3 w-full items-center gap-1 bg-[#8f8f8f] pl-[7px] text-white">
                Все темы
                <svg viewBox="0 0 8 5" aria-hidden="true" className="h-[5px] w-2"><path d="M0 0h8L4 5z" fill="#fff" /></svg>
            </button>
            <div className="flex">
                <div className="min-w-0 flex-1">
                    <h3 className="h-[18px] bg-[#f0f1f5] pl-[7px] leading-5 font-semibold">Эта презентация</h3>
                    <div className="mb-px h-14 w-[72px] rounded-xs border border-[#c79c32] bg-[#fbe081] p-[3px]">
                        <ThemeThumb theme={themes[0]} />
                    </div>
                    <h3 className="h-[18px] bg-[#f0f1f5] pl-[7px] leading-5 font-semibold">Встроенные</h3>
                    <div className="grid grid-cols-[repeat(4,64px)] gap-2 px-1 py-1">
                        {themes.map((t) => <ThemeThumb key={t.name} theme={t} />)}
                    </div>
                </div>
                <div className="flex w-4 flex-col border-x border-[#d5d8de] bg-[#f2f3f5] pt-px">
                    <button aria-label="Вверх" className="flex h-4 items-center justify-center border border-[#b9bdc5] bg-[#f5f6f8]">
                        <svg viewBox="0 0 8 5" className="h-[5px] w-2"><path d="M0 5h8L4 0z" fill="#3c4668" /></svg>
                    </button>
                    <div className="flex h-[136px] flex-col items-center justify-center gap-px border border-[#a9adb5] bg-linear-to-r from-[#f8f9fa] to-[#d9dbdf]">
                        <span className="h-px w-2 bg-[#888]"></span>
                        <span className="h-px w-2 bg-[#888]"></span>
                        <span className="h-px w-2 bg-[#888]"></span>
                        <span className="h-px w-2 bg-[#888]"></span>
                    </div>
                    <div className="flex-1"></div>
                    <button aria-label="Вниз" className="flex h-4 items-center justify-center border border-[#b9bdc5] bg-[#e9ebef]">
                        <svg viewBox="0 0 8 5" className="h-[5px] w-2"><path d="M0 0h8L4 5z" fill="#3c4668" /></svg>
                    </button>
                </div>
            </div>
            <div className="border-t border-[#dcdde0] pt-px">
                {[
                    { text: 'Разрешить обновление контента с сайта Office.com...' },
                    { text: 'Поиск тем...', icon: 'browse' },
                    { text: 'Сохранить текущую тему...', icon: 'saveTheme' },
                ].map((item) => (
                    <button key={item.text} className="flex h-[22px] w-full items-center">
                        <span className="flex h-full w-[25px] items-center border-r border-[#e2e4e7] pl-1">
                            {item.icon && <Icon name={item.icon} />}
                        </span>
                        <span className="pl-2 whitespace-nowrap"><u className="underline-offset-2">{item.text[0]}</u>{item.text.slice(1)}</span>
                    </button>
                ))}
            </div>
            <div className="flex h-[11px] items-end justify-end bg-linear-to-b from-[#e0e0e0] to-[#bdbdbd] pr-px">
                <svg viewBox="0 0 8 8" className="h-2 w-2"><path d="M6 0h2v2H6zM3 3h2v2H3zM6 3h2v2H6zM0 6h2v2H0zM3 6h2v2H3zM6 6h2v2H6z" fill="#999" /></svg>
            </div>
        </div>
    );
}

function TitleBar() {
    return (
        <div className="grid h-6 grid-cols-[1fr_auto_1fr] items-start">
            <div className="flex h-[23px] items-center pl-px">
                <Icon name="app" />
                <span className="mr-2 ml-1 h-[14px] w-px bg-[#6c4193]"></span>
                <div className="flex items-center rounded-full bg-white/20 shadow-[0_0_6px_3px_rgba(255,255,255,0.2)]">
                    <button aria-label="Сохранить" className="mr-[5px]"><Icon name="save" className="h-[14px] w-[14px]" /></button>
                    <button aria-label="Отменить" className="mr-2 flex items-center gap-1">
                        <Icon name="undo" />
                        <Caret className="text-[#83649f]" />
                    </button>
                    <button aria-label="Повторить"><Icon name="repeat" className="h-[15px] w-[15px]" /></button>
                </div>
                <span className="mr-1 ml-1.5 h-[14px] w-px bg-[#6c4193]"></span>
                <button aria-label="Настройка панели">
                    <svg viewBox="0 0 8 7" className="h-[7px] w-2"><path d="M0 0h8v1H0zM0 3h8L4 7z" fill="#2b1740" /></svg>
                </button>
            </div>
            <h1 className="h-6 text-[14px] leading-[26px] whitespace-pre text-[#2e1e44] [text-shadow:0_0_8px_#d6b4f5,0_0_6px_#d6b4f5]">Презентация7  -  Microsoft PowerPoint</h1>
            <div className="flex justify-end pr-1 text-[#341b52]">
                <button aria-label="Свернуть" className="flex h-5 w-[26px] items-center justify-center">
                    <svg viewBox="0 0 8 8" className="h-2 w-2"><path d="M0 5h8v2H0z" fill="currentColor" /></svg>
                </button>
                <button aria-label="Восстановить" className="flex h-5 w-[26px] items-center justify-center">
                    <svg viewBox="0 0 10 10" className="h-[10px] w-[10px]"><path d="M.5 2.500h7v7h-7zM1 3.500h6M2 .5h7.500V8" fill="none" stroke="currentColor" /></svg>
                </button>
                <button aria-label="Закрыть" className="ml-[2px] flex h-[19px] w-[43px] items-center justify-center bg-[#c74f50] text-white"><Cross /></button>
            </div>
        </div>
    );
}

function RibbonTabs() {
    return (
        <nav className="flex h-[25px] items-end text-[11px] leading-[22px] whitespace-nowrap text-[#ece6f2]">
            <button className="mr-1 h-6 w-[55px] rounded-t-xs border border-[#c9582c] bg-linear-to-b from-[#ec5b33] via-[#e44b20] to-[#fb9a58] text-white">Файл</button>
            <button className="h-6 px-[14px]">Главная</button>
            <button className="mr-[3px] h-[23px] w-[57px] rounded-t-xs bg-[#cfcfcf] text-black">Меню</button>
            <div className="flex gap-px">
                {ribbonTabs.map((tab) => (
                    <button key={tab} className="h-6 px-[13px]">{tab}</button>
                ))}
            </div>
            <span className="flex flex-1 items-center justify-end gap-[9px] self-center pr-[3px]">
                <button aria-label="Свернуть ленту">
                    <svg viewBox="0 0 8 6" className="h-[6px] w-2"><path d="m1 5 3-3 3 3" fill="none" stroke="#eee" strokeWidth="2" /></svg>
                </button>
                <button aria-label="Справка"><HelpIcon /></button>
            </span>
        </nav>
    );
}

function ToolSelect({ label, className }) {
    return (
        <span className={clsx('relative block h-[21px] border border-[#a2a2a2]', className)}>
            <select aria-label={label} disabled className="h-full w-full appearance-none bg-transparent"></select>
            <Caret className="pointer-events-none absolute top-2 right-1 text-[#5a5a5a]" />
        </span>
    );
}

function Ribbon() {
    const [open, setOpen] = useState(true);

    return (
        <section className="flex h-[86px] border-b border-[#575757] bg-linear-to-b from-[#cacaca] via-[#b9b9b9] to-[#a3a3a3] text-[11px] text-[#1c1c1c]">
            <div className="flex w-[771px] shrink-0 flex-col border-r border-[#858585] pt-[2px]">
                <div className="flex h-[22px] items-center gap-[7px] pl-[6px]">
                    {menus.map((m) => (
                        <button key={m} className="flex items-center gap-[3px] text-black">{m}<Caret /></button>
                    ))}
                </div>
                <div className="flex h-[22px] items-center pl-[3px]">
                    {standardTools.map((t) => <Tool key={t.icon} {...t} />)}
                    <span className="flex flex-1 items-center justify-between pr-[2px]">
                        {insertTools.map((t) => <Tool key={t.icon} {...t} />)}
                    </span>
                </div>
                <div className="flex h-[23px] items-center pl-1">
                    <ToolSelect label="Шрифт" className="mr-1 w-[84px]" />
                    <ToolSelect label="Размер" className="mr-1 w-[39px]" />
                    <span className="flex font-['Liberation_Serif'] text-[14px] leading-5 font-bold text-[#4a4a4a]">
                        <button className="w-6">Ж</button>
                        <button className="w-6 italic">К</button>
                        <button className="w-6 underline">Ч</button>
                        <button className="w-[23px] [text-shadow:1px_1px_1px_#777]">S</button>
                    </span>
                    {alignTools.map((t) => <Tool key={t.icon} {...t} />)}
                    <span className="mr-1 flex items-center font-['Liberation_Serif'] leading-5 font-bold text-[#555]">
                        <button className="w-6 text-[16px]">A<sup className="text-[8px]">▴</sup></button>
                        <button className="w-5 text-[12px]">A<sup className="text-[8px]">▾</sup></button>
                    </span>
                    <Tool icon="outdent" label="Уменьшить отступ" />
                    <Tool icon="indent" label="Увеличить отступ" />
                    <button aria-label="Цвет текста" className="flex w-8 items-center gap-[7px] pl-2 font-['Liberation_Serif'] text-[16px] leading-5 font-bold text-[#777]">A<Caret /></button>
                    <div className="relative ml-auto">
                        <button onClick={() => setOpen(!open)} className="flex h-[23px] w-[62px] items-center gap-[3px] rounded-xs border border-[#c19a3b] bg-linear-to-b from-[#fbd56c] to-[#fde58c] pl-[3px] text-[#4a3a12]">
                            <span className="flex h-[15px] w-[15px] shrink-0 items-center justify-center border border-[#555] bg-white text-[10px] leading-3 text-black">A</span>
                            Темы
                            <Caret />
                        </button>
                        {open && <ThemesMenu />}
                    </div>
                    <button className="mr-[13px] ml-1 flex items-center gap-[3px] whitespace-nowrap text-black">
                        <Icon name="newSlide" />
                        Создать слайд
                        <Caret />
                    </button>
                </div>
                <p className="text-center leading-4 whitespace-pre">UBit Schweiz AG    (www.ubit.ch)</p>
            </div>
            <div className="flex w-[309px] shrink-0 flex-col border-r border-[#858585] pt-[2px]">
                <div className="flex h-[22px] items-center pl-[9px]">
                    <button className="mr-1 flex items-center gap-1 text-black">Рисование<Caret /></button>
                    <button aria-label="Выбор" className="mr-[7px] flex h-[22px] w-[21px] shrink-0 items-center justify-center rounded-xs border border-[#c19a3b] bg-[#fcda74]"><Icon name="cursor" /></button>
                    <button className="mr-1 flex items-center gap-[3px] text-black"><Icon name="shapes" />Фигуры<Caret /></button>
                    <span className="flex">
                        <Tool icon="line" label="Линия" />
                        <Tool icon="lineArrow" label="Стрелка" />
                        <Tool icon="textBox" label="Надпись" />
                        <Tool icon="wordArt" label="WordArt" menu />
                        <Tool icon="clipArt" label="Картинка" />
                    </span>
                </div>
                <div className="flex h-[22px] w-[242px] items-center justify-between pl-[5px]">
                    {pictureTools.map((t) => <Tool key={t.icon} {...t} />)}
                </div>
                <div className="flex h-[23px] items-center pl-[5px]">
                    <Tool icon="bucket" label="Заливка" menu />
                    <Tool icon="pen" label="Контур" menu />
                    <button aria-label="Цвет шрифта" className="flex w-[34px] items-center gap-[7px] pl-2 font-['Liberation_Serif'] text-[15px] leading-5 font-bold text-[#5c5c5c]">A<Caret /></button>
                    <Tool icon="weight" label="Толщина" menu />
                    <Tool icon="dash" label="Штрихи" menu />
                    <Tool icon="arrows" label="Стрелки" menu />
                </div>
                <p className="text-center leading-4">Рисование - Рисунок</p>
            </div>
        </section>
    );
}

function DocTabs() {
    return (
        <div className="flex h-8 items-end border-b-2 border-[#f4f4f4] bg-linear-to-b from-[#6b6b6b] to-[#9a9a9a] pl-px">
            {[1, 2, 3, 4, 5, 6, 7].map((n) => (
                <button
                    key={n}
                    className={clsx(
                        'mr-[3px] flex h-[25px] w-[143px] shrink-0 items-center rounded-t-md border border-b-0 text-[13px]',
                        n === 7
                            ? 'border-[#d9a94b] bg-linear-to-b from-[#fcc955] to-[#fff3b8] font-bold text-[#3b2e10]'
                            : 'border-[#555] bg-linear-to-b from-[#979797] to-[#858585] text-[#4a4a4a]'
                    )}
                >
                    <Icon name="doc" className="ml-[5px] h-4 w-4" />
                    <span className={clsx('flex-1', n === 7 ? 'pr-1 text-[12px]' : 'pl-px')}>Презентация{n}</span>
                    {n === 7 && <Cross className="mr-2 h-[10px] w-[10px] text-[#3b2e10]" />}
                </button>
            ))}
            <button aria-label="Новая вкладка" className="h-6 w-[29px] rounded-t-md border border-b-0 border-[#555] bg-linear-to-b from-[#a0a0a0] to-[#808080]"></button>
            <div className="mb-[3px] ml-auto flex gap-[3px] pr-px text-black">
                <button aria-label="Список вкладок" className="flex h-5 w-5 items-center justify-center bg-[#f4f4f4]">
                    <svg viewBox="0 0 8 4" className="h-1 w-2"><path d="M0 0h8L4 4z" /></svg>
                </button>
                <button aria-label="Закрыть вкладку" className="flex h-5 w-5 items-center justify-center bg-[#f4f4f4]"><Cross /></button>
            </div>
        </div>
    );
}

function SlidesPane() {
    return (
        <aside className="flex w-[224px] shrink-0 flex-col">
            <div className="flex h-[21px] border-b border-[#444] bg-[#515151] text-[12px] text-white">
                <button className="w-[79px] bg-[#686868]">Слайды</button>
                <button className="w-[81px] border-x border-[#3b3b3b]">Структура</button>
                <button aria-label="Закрыть область" className="mr-[7px] ml-auto"><Cross /></button>
            </div>
            <button className="mt-[3px] ml-[3px] flex h-[152px] w-[215px] rounded-xs border border-[#c4b98a] bg-linear-to-b from-[#fdf0b4] via-[#fcde7a] to-[#fffbe0] p-[3px]">
                <span className="w-4 pt-[3px] font-['DejaVu_Sans'] text-[12px] leading-4 font-bold text-black">1</span>
                <span className="h-full flex-1 border border-[#7c7c7c] bg-white"></span>
            </button>
        </aside>
    );
}

function Editor() {
    return (
        <main className="flex min-w-0 flex-1 flex-col">
            <div className="flex min-h-0 flex-1">
                <div className="flex min-w-0 flex-1 justify-center pt-[17px] pb-[18px]">
                    <article className="flex aspect-[4/3] h-full flex-col items-center bg-white pt-[196px] font-['Lato','Open_Sans',sans-serif] shadow-[2px_2px_5px_rgba(0,0,0,0.6)]">
                        <h2 className="flex h-[137px] w-[85.2%] items-center justify-center border border-dotted border-[#444] text-[46px] leading-[56px] text-black">Заголовок слайда</h2>
                        <p className="mt-6 h-[164px] w-[70.2%] border border-dotted border-[#444] pt-1 text-center text-[34px] leading-[46px] text-[#8b8b8b]">Подзаголовок слайда</p>
                    </article>
                </div>
                <div className="w-1 bg-[#7d7d7d]"></div>
            </div>
            <div className="h-[5px] border-t border-[#a8a8a8] bg-[#7f7f7f]"></div>
            <div className="flex h-[38px] pr-1">
                <textarea aria-label="Заметки" defaultValue="Заметки к слайду" className="flex-1 resize-none bg-white px-[10px] pt-1 font-['Noto_Sans',sans-serif] text-[15px] leading-5 text-[#111] outline-none"></textarea>
                <div className="flex w-4 flex-col items-center justify-around bg-[#686868]">
                    <svg viewBox="0 0 8 5" className="h-[5px] w-2"><path d="M0 5h8L4 0z" fill="#999" /></svg>
                    <svg viewBox="0 0 8 5" className="h-[5px] w-2"><path d="M0 0h8L4 5z" fill="#999" /></svg>
                </div>
            </div>
        </main>
    );
}

const ZoomButton = ({ label, d }) => (
    <button aria-label={label}>
        <svg viewBox="0 0 14 14" className="h-[14px] w-[14px]">
            <circle cx="7" cy="7" r="6.500" fill="#bdbdbd" stroke="#d8d8d8" />
            <path d={d} stroke="#2c2c2c" strokeWidth="2" />
        </svg>
    </button>
);

function StatusBar() {
    return (
        <footer className="grid h-[21px] grid-cols-[1fr_auto_1fr] items-center border-t border-[#2a2a2a] bg-linear-to-b from-[#4c4c4c] to-[#333] text-[11px] text-[#e6e6e6]">
            <div className="flex h-full items-center leading-4">
                <span className="border-r border-[#1c1c1c] pr-[9px] pl-2">Слайд 1 из 1</span>
                <span className="border-r border-[#1c1c1c] px-2">"Тема Office"</span>
                <span className="border-r border-[#1c1c1c] px-[9px]">русский</span>
            </div>
            <span className="font-['Liberation_Serif'] text-[14px] leading-4 text-white italic">SA</span>
            <div className="flex h-full items-center justify-end pr-[5px]">
                <div className="mr-3 flex items-center gap-[3px] border-l border-[#1c1c1c] pl-1">
                    <button aria-label="Обычный" className="rounded-xs border border-[#d2a63c] bg-[#fbdc80]"><Icon name="normalView" /></button>
                    <button aria-label="Сортировщик слайдов"><Icon name="sorter" className="h-[14px] w-4" /></button>
                    <button aria-label="Режим чтения"><Icon name="reading" className="h-[14px] w-4" /></button>
                    <button aria-label="Показ слайдов"><Icon name="show" className="h-[14px] w-4" /></button>
                </div>
                <span className="mr-2">88%</span>
                <ZoomButton label="Уменьшить" d="M3 7h8" />
                <input
                    type="range"
                    aria-label="Масштаб"
                    min="0"
                    max="100"
                    defaultValue="44"
                    className="h-3 w-[102px] appearance-none bg-linear-to-b from-transparent from-45% via-[#a0a0a0] via-50% to-transparent to-55% [&::-webkit-slider-thumb]:h-[11px] [&::-webkit-slider-thumb]:w-2 [&::-webkit-slider-thumb]:appearance-none [&::-webkit-slider-thumb]:rounded-b-sm [&::-webkit-slider-thumb]:bg-[#c8c8c8]"
                />
                <ZoomButton label="Увеличить" d="M3 7h8M7 3v8" />
                <button aria-label="Вписать в окно" className="ml-2"><Icon name="fit" /></button>
            </div>
        </footer>
    );
}

export default function App() {
    return (
        <div className="flex h-screen flex-col overflow-hidden bg-[#8a62a8] font-['Open_Sans','Noto_Sans',sans-serif]">
            <header className="bg-linear-to-b from-[#ad66e8] from-10% via-[#6d4c84] via-55% to-[#4b434f]">
                <TitleBar />
                <RibbonTabs />
            </header>
            <Ribbon />
            <DocTabs />
            <div className="flex min-h-0 flex-1 bg-linear-to-b from-[#6f6f6f] to-[#3e3e3e]">
                <SlidesPane />
                <div className="w-[5px] border-x border-[#4a4a4a] bg-[#8b8b8b]"></div>
                <Editor />
            </div>
            <StatusBar />
            <div className="h-[2px] shrink-0 bg-[#8a62a8]"></div>
        </div>
    );
}
